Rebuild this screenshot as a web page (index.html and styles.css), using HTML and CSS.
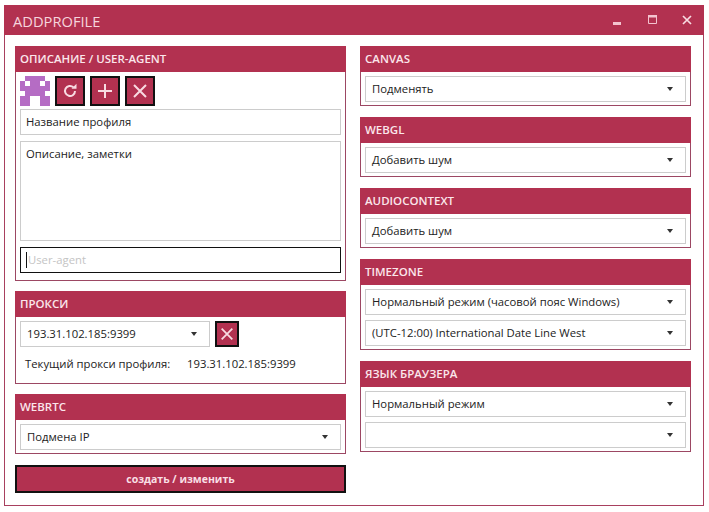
FILE: index.html
```html
<!DOCTYPE html>
<html lang="ru">
<head>
    <meta charset="UTF-8">
    <meta name="viewport" content="width=device-width, initial-scale=1.0">
    <title>ADDPROFILE</title>
    <link rel="stylesheet" href="styles.css">
</head>
<body>
    <div class="window">
        <div class="titlebar">
            <span class="title">ADDPROFILE</span>
            <div class="win-buttons">
                <svg width="12" height="12" viewBox="0 0 12 12"><rect x="2" y="8" width="8" height="3" fill="#f3c3cf"/></svg>
                <svg width="12" height="12" viewBox="0 0 12 12"><path d="M2.5 2.5h8v7h-8z" fill="none" stroke="#f3c3cf"/><rect x="2" y="1" width="9" height="2.5" fill="#f3c3cf"/></svg>
                <svg width="12" height="12" viewBox="0 0 12 12"><path d="M2 2l8 8M10 2l-8 8" stroke="#f8dbe2" stroke-width="1.7"/></svg>
            </div>
        </div>
        <div class="content">
            <div class="column column-left">
                <section class="panel panel-main">
                    <h2>ОПИСАНИЕ / USER-AGENT</h2>
                    <div class="panel-body">
                        <div class="tools">
                            <svg class="avatar" width="30" height="30" viewBox="0 0 6 6" shape-rendering="crispEdges">
                                <path fill="#b56cc4" d="M1 0h4v1h1v2h-1v1h1v2h-2v-1h-2v1h-2v-2h1v-1h-1v-2h1z"/>
                                <path fill="#fff" d="M1 1h1v1h-1zM4 1h1v1h-1zM2 4h2v1h-2z"/>
                            </svg>
                            <button class="icon-btn">
                                <svg width="18" height="18" viewBox="0 0 18 18"><path d="M14 9a5 5 0 1 1-1.6-3.7" fill="none" stroke="#f8dbe2" stroke-width="2"/><path d="M10.5 6.8h5v-5z" fill="#f8dbe2"/></svg>
                            </button>
                            <button class="icon-btn">
                                <svg width="18" height="18" viewBox="0 0 18 18"><path d="M9 2v14M2 9h14" stroke="#f8dbe2" stroke-width="2"/></svg>
                            </button>
                            <button class="icon-btn">
                                <svg width="18" height="18" viewBox="0 0 18 18"><path d="M3 3l12 12M15 3l-12 12" stroke="#f8dbe2" stroke-width="2"/></svg>
                            </button>
                        </div>
                        <div class="field field-name">Название профиля</div>
                        <div class="field field-notes">Описание, заметки</div>
                        <div class="field field-focus"><span class="caret"></span><span class="placeholder">User-agent</span></div>
                    </div>
                </section>
                <section class="panel">
                    <h2>ПРОКСИ</h2>
                    <div class="panel-body">
                        <div class="proxy-row">
                            <div class="field select select-proxy">193.31.102.185:9399</div>
                            <button class="icon-btn">
                                <svg width="18" height="18" viewBox="0 0 18 18"><path d="M3 3l12 12M15 3l-12 12" stroke="#f8dbe2" stroke-width="2"/></svg>
                            </button>
                        </div>
                        <div class="proxy-info">
                            <span class="proxy-label">Текущий прокси профиля:</span>
                            <span>193.31.102.185:9399</span>
                        </div>
                    </div>
                </section>
                <section class="panel">
                    <h2>WEBRTC</h2>
                    <div class="panel-body">
                        <div class="field select">Подмена IP</div>
                    </div>
                </section>
                <button class="submit">создать / изменить</button>
            </div>
            <div class="column">
                <section class="panel">
                    <h2>CANVAS</h2>
                    <div class="panel-body">
                        <div class="field select">Подменять</div>
                    </div>
                </section>
                <section class="panel">
                    <h2>WEBGL</h2>
                    <div class="panel-body">
                        <div class="field select">Добавить шум</div>
                    </div>
                </section>
                <section class="panel">
                    <h2>AUDIOCONTEXT</h2>
                    <div class="panel-body">
                        <div class="field select">Добавить шум</div>
                    </div>
                </section>
                <section class="panel">
                    <h2>TIMEZONE</h2>
                    <div class="panel-body">
                        <div class="field select">Нормальный режим (часовой пояс Windows)</div>
                        <div class="field select">(UTC-12:00) International Date Line West</div>
                    </div>
                </section>
                <section class="panel">
                    <h2>ЯЗЫК БРАУЗЕРА</h2>
                    <div class="panel-body">
                        <div class="field select">Нормальный режим</div>
                        <div class="field select"></div>
                    </div>
                </section>
            </div>
        </div>
    </div>
</body>
</html>
```

FILE: styles.css
```css
body {
    margin: 0;
    background: #fff;
    font-family: "Open Sans", "Noto Sans", sans-serif;
    font-size: 11.3px;
    color: #222;
}

.window {
    width: 700px;
    height: 501px;
    margin: 5px 0 0 4px;
    box-sizing: border-box;
    border: 1px solid #a8405f;
    border-top: none;
}

.titlebar {
    height: 30px;
    margin: 0 -1px;
    padding-top: 2px;
    box-sizing: border-box;
    background: #b23150;
    display: flex;
    align-items: center;
    justify-content: space-between;
}

.title {
    font-size: 14.7px;
    color: #f6d5dd;
    padding-left: 9px;
}

.win-buttons {
    display: flex;
    gap: 23px;
    padding-right: 11px;
    margin-top: -2px;
}

.content {
    display: flex;
    gap: 14px;
    padding: 11px 11px 0 10px;
}

.column {
    width: 331px;
    display: flex;
    flex-direction: column;
    gap: 11px;
}

.column-left {
    gap: 10px;
}

.panel {
    border: 1px solid #9c4763;
    border-top: none;
}

.panel h2 {
    margin: 0 -1px;
    height: 26px;
    line-height: 26px;
    padding-left: 5px;
    background: #b23150;
    color: #fbe6eb;
    font-size: 11.5px;
    font-weight: 600;
}

.panel-body {
    padding: 4px 4px 3px;
    display: flex;
    flex-direction: column;
    gap: 5px;
}

.panel-main .panel-body {
    padding-bottom: 7px;
    gap: 6px;
}

.tools {
    display: flex;
    align-items: center;
    gap: 5px;
}

.icon-btn {
    width: 30px;
    height: 30px;
    padding: 0;
    box-sizing: border-box;
    border: 2px solid #111;
    background: #b23150;
    display: flex;
    align-items: center;
    justify-content: center;
}

.field {
    height: 26px;
    box-sizing: border-box;
    border: 1px solid #ccc;
    padding: 0 5px;
    line-height: 24px;
    background: #fff;
}

.field-name {
    margin-top: -3px;
}

.field-notes {
    height: 100px;
}

.field-focus {
    border: 1px solid #111;
    display: flex;
    align-items: center;
    padding-left: 5px;
}

.caret {
    width: 1px;
    height: 16px;
    background: #111;
}

.placeholder {
    color: #c4c4c4;
    margin-left: 1px;
}

.select {
    position: relative;
    padding-left: 6px;
}

.select::after {
    content: "";
    position: absolute;
    right: 12px;
    top: 10px;
    border-left: 3px solid transparent;
    border-right: 3px solid transparent;
    border-top: 4px solid #333;
}

.proxy-row {
    display: flex;
    align-items: center;
    gap: 5px;
}

.proxy-row .icon-btn {
    width: 24px;
    height: 26px;
}

.proxy-row .icon-btn svg {
    width: 16px;
    height: 16px;
}

.select-proxy {
    width: 190px;
}

.proxy-info {
    display: flex;
    line-height: 24px;
    padding: 0 0 4px 5px;
}

.proxy-label {
    width: 162px;
}

.submit {
    height: 28px;
    margin-top: 1px;
    padding: 0;
    border: 2px solid #111;
    background: #b23150;
    color: #f9dfe5;
    font-family: inherit;
    font-size: 10.5px;
    font-weight: 700;
}
```
